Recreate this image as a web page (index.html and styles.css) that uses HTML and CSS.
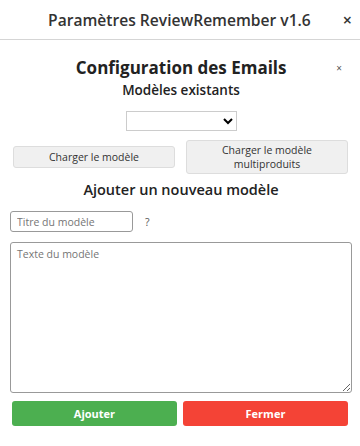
FILE: index.html
```html
<!DOCTYPE html>
<html lang="fr">
<head>
    <meta charset="UTF-8">
    <meta name="viewport" content="width=device-width, initial-scale=1.0">
    <title>Paramètres ReviewRemember</title>
    <link rel="stylesheet" href="styles.css">
</head>
<body>
    <div class="header">
        <h1>Paramètres ReviewRemember v1.6</h1>
        <span class="close">×</span>
    </div>
    <div class="container">
        <div class="title-row">
            <h2>Configuration des Emails</h2>
            <span class="close-small">×</span>
        </div>
        <h3>Modèles existants</h3>
        <select id="modeles"></select>
        <div class="load-buttons">
            <button class="btn-gray">Charger le modèle</button>
            <button class="btn-gray tall">Charger le modèle<br>multiproduits</button>
        </div>
        <h3 class="big">Ajouter un nouveau modèle</h3>
        <div class="title-field">
            <input type="text" id="titre" placeholder="Titre du modèle">
            <span class="help">?</span>
        </div>
        <textarea id="texte" placeholder="Texte du modèle"></textarea>
        <div class="actions">
            <button class="btn-green">Ajouter</button>
            <button class="btn-red">Fermer</button>
        </div>
    </div>
</body>
</html>
```

FILE: styles.css
```css
body {
    font-family: 'Open Sans', sans-serif;
    background: white;
    color: #222;
    margin: 0;
    padding: 0;
}
.header {
    height: 40px;
    display: flex;
    align-items: center;
    padding: 0 8px 0 16px;
    border-bottom: 1px solid #d5d5d5;
    box-sizing: border-box;
}
.header h1 {
    flex: 1;
    margin: 0;
    text-align: center;
    font-size: 15.6px;
    font-weight: 600;
    color: #333;
}
.close {
    font-size: 16px;
    font-weight: 600;
    color: #333;
}
.container {
    padding: 0 8px 0 10px;
}
.title-row {
    display: flex;
    align-items: center;
    padding: 16px 10px 0 16px;
    height: 24px;
}
.title-row h2 {
    flex: 1;
    margin: 0;
    text-align: center;
    font-size: 17px;
    line-height: 24px;
    font-weight: 700;
}
.close-small {
    font-size: 10px;
    color: #555;
}
h3 {
    margin: 0;
    text-align: center;
    font-size: 13.5px;
    line-height: 20px;
    font-weight: 600;
}
h3.big {
    font-size: 14.5px;
    line-height: 22px;
    margin-top: 5px;
}
select {
    display: block;
    width: 111px;
    height: 20px;
    margin: 11px auto 0;
    border: 1px solid #ccc;
    background: white;
}
.load-buttons {
    display: flex;
    align-items: center;
    gap: 11px;
    margin: 9px 4px 0 3px;
}
.btn-gray {
    flex: 1;
    font-family: inherit;
    font-size: 10.5px;
    line-height: 14px;
    color: #333;
    background: #f0f0f0;
    border: 1px solid #ddd;
    border-radius: 3px;
    padding: 3px 4px;
}
.btn-gray.tall {
    padding: 2px 4px;
}
.title-field {
    display: flex;
    align-items: center;
    gap: 12px;
    margin-top: 10px;
}
input {
    width: 123px;
    height: 21px;
    box-sizing: border-box;
    border: 1px solid #999;
    border-radius: 3px;
    padding: 0 6px;
    font-family: inherit;
    font-size: 10.5px;
}
.help {
    font-size: 10.5px;
    color: #555;
}
textarea {
    display: block;
    width: 342px;
    height: 151px;
    box-sizing: border-box;
    margin-top: 10px;
    border: 1px solid #999;
    border-radius: 3px;
    padding: 4px 6px;
    font-family: inherit;
    font-size: 10.5px;
    resize: vertical;
}
.actions {
    display: flex;
    gap: 6px;
    margin: 8px 4px 0 2px;
}
.actions button {
    flex: 1;
    height: 25px;
    border: none;
    border-radius: 3px;
    color: white;
    font-family: inherit;
    font-weight: 700;
    font-size: 11px;
}
.btn-green { background: #4caf50; }
.btn-red { background: #f44336; }
```
